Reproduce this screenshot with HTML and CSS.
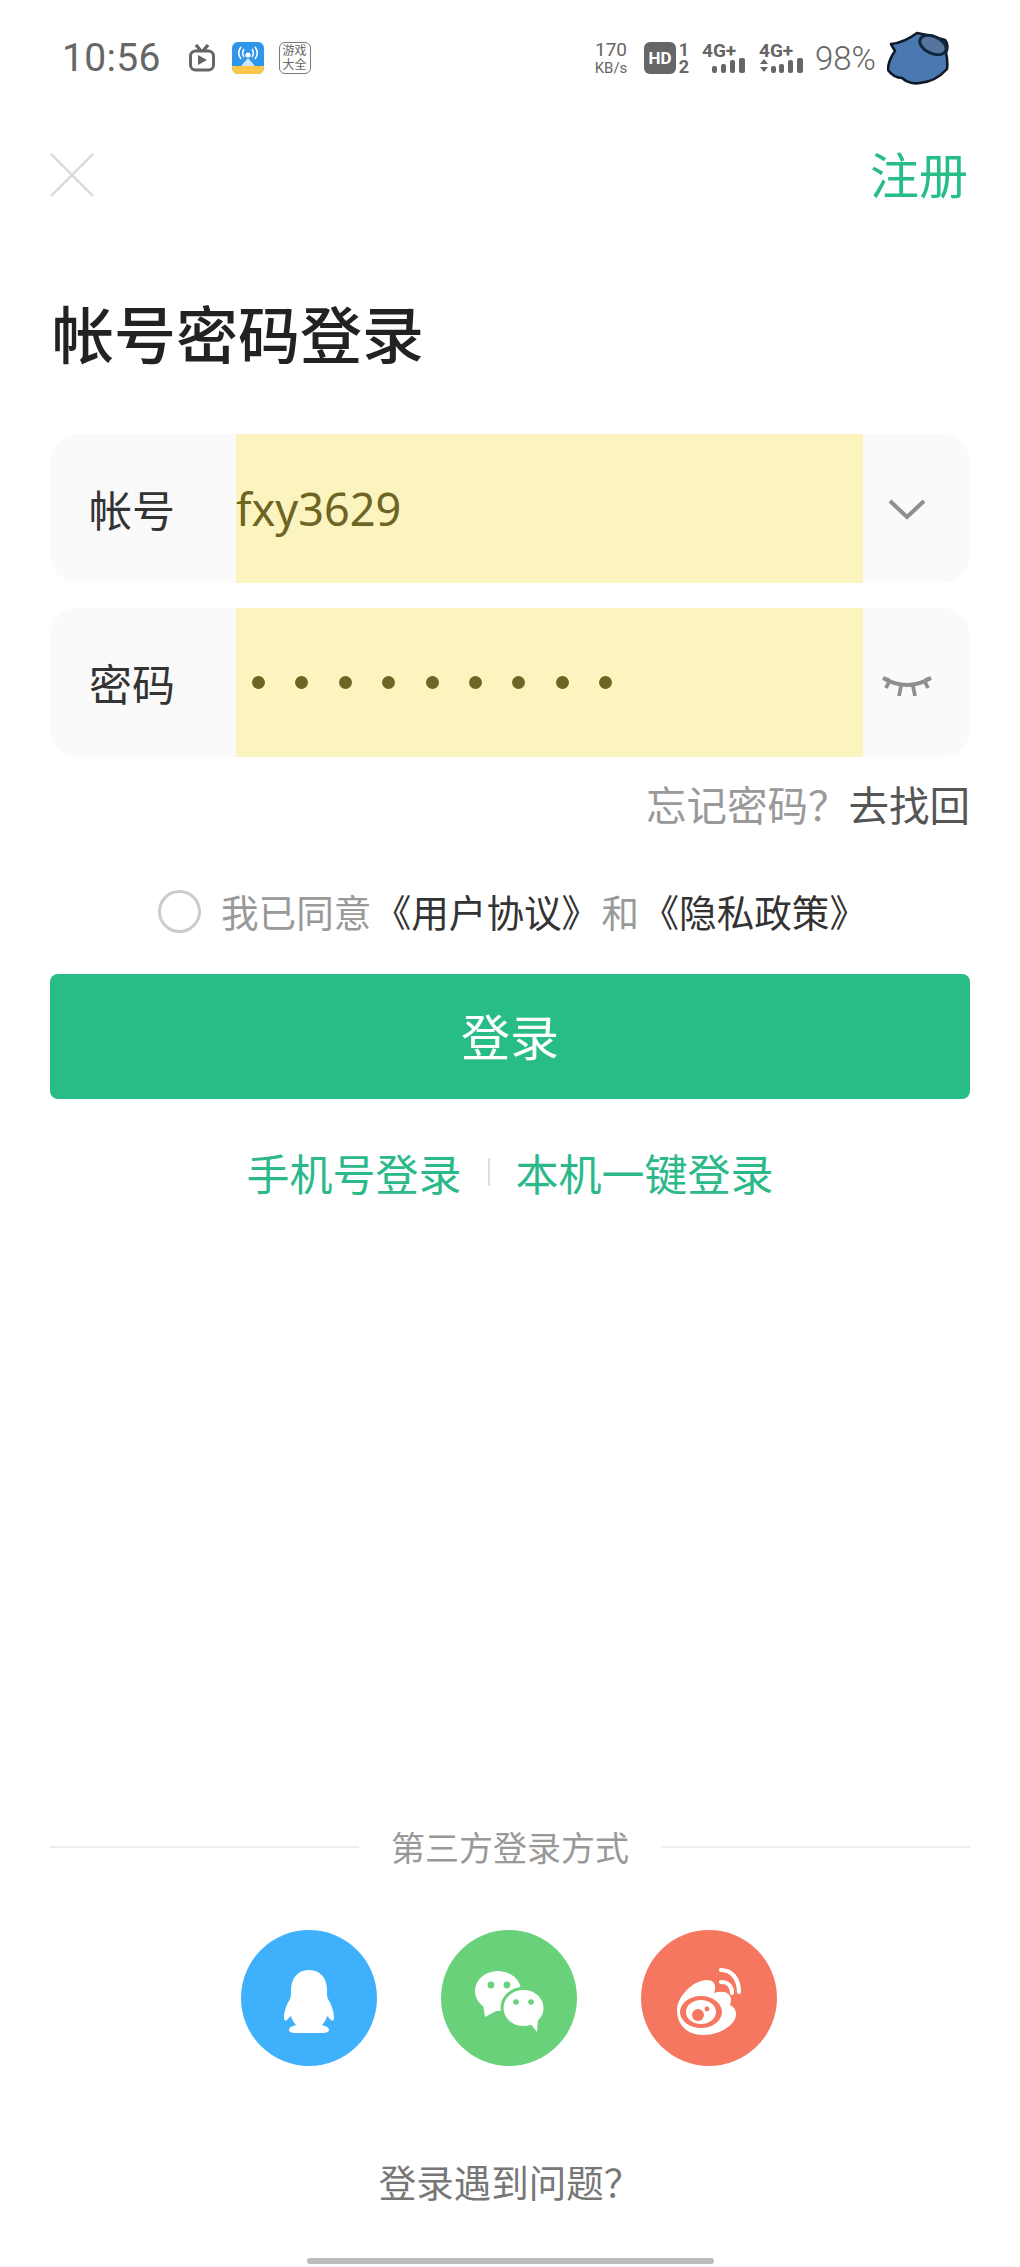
FILE: index.html
```html
<!DOCTYPE html>
<html lang="zh">
<head>
    <meta charset="UTF-8">
    <meta name="viewport" content="width=device-width, initial-scale=1.0">
    <title>帐号密码登录</title>
    <link rel="stylesheet" href="styles.css">
</head>
<body>
    <div class="page">
        <div class="status-bar">
            <span class="clock">10:56</span>
            <svg class="st-tv" width="26" height="28" viewBox="0 0 26 28">
                <path d="M7 1l5 6M19 1l-5 6" stroke="#666" stroke-width="3.4" fill="none"/>
                <rect x="1.5" y="7" width="23" height="19" rx="5" fill="none" stroke="#666" stroke-width="3"/>
                <path d="M9 11l9 5-9 5z" fill="#666"/>
            </svg>
            <svg class="st-wifi" width="32" height="32" viewBox="0 0 32 32">
                <rect width="32" height="32" rx="6" fill="#2f96ea"/>
                <path d="M0 24h32v2a6 6 0 0 1-6 6H6a6 6 0 0 1-6-6z" fill="#fbc64a"/>
                <path d="M9 5c-3 4-3 8 0 12M23 5c3 4 3 8 0 12M12 7c-2 3-2 5 0 8M20 7c2 3 2 5 0 8" stroke="#fff" stroke-width="1.6" fill="none"/>
                <circle cx="16" cy="13" r="2.6" fill="#fff"/>
                <path d="M9 24l7-8 7 8z" fill="#cfe6fa"/>
            </svg>
            <span class="st-game">游戏<br>大全</span>
            <span class="st-spacer"></span>
            <span class="speed">170<small>KB/s</small></span>
            <span class="hd"><b>HD</b></span>
            <span class="sim-nums">1<br>2</span>
            <span class="net">
                <b>4G+</b>
                <svg width="34" height="16" viewBox="0 0 34 16">
                    <rect x="0" y="8" width="5" height="7" rx="2" fill="#666"/>
                    <rect x="9" y="6" width="5" height="9" rx="2" fill="#666"/>
                    <rect x="18" y="2" width="5" height="13" rx="2" fill="#666"/>
                    <rect x="27" y="0" width="6" height="15" rx="2" fill="#666"/>
                </svg>
            </span>
            <span class="net net-2">
                <b>4G+</b>
                <svg width="45" height="16" viewBox="0 0 45 16">
                    <path d="M1 6l4-5 4 5zM1 9h8l-4 5z" fill="#666"/>
                    <rect x="12" y="8" width="5" height="7" rx="2" fill="#666"/>
                    <rect x="20" y="6" width="5" height="9" rx="2" fill="#666"/>
                    <rect x="29" y="2" width="5" height="13" rx="2" fill="#666"/>
                    <rect x="38" y="0" width="6" height="15" rx="2" fill="#666"/>
                </svg>
            </span>
            <span class="battery">98%</span>
            <svg class="avatar" width="62" height="54" viewBox="0 0 62 54">
                <path d="M30 2C22 8 14 12 4 13l4 7C3 27 1 32 1 39c3 5 9 8 14 8 5 5 13 6 18 5 11-1 19-5 27-14 1-8 0-12-1-16 2-4 2-10-1-13L40 4z" fill="#4a78b0" stroke="#0f1a28" stroke-width="2.6" stroke-linejoin="round"/>
                <ellipse cx="46" cy="14" rx="14" ry="8.5" transform="rotate(25 46 14)" fill="#56749c" stroke="#10263f" stroke-width="3"/>
            </svg>
        </div>

        <div class="nav">
            <svg class="close-icon" width="44" height="44" viewBox="0 0 44 44">
                <path d="M1 1l42 42M43 1L1 43" stroke="#d9d9d9" stroke-width="2.4"/>
            </svg>
            <a class="nav-register">注册</a>
        </div>

        <h1 class="title">帐号密码登录</h1>

        <div class="field">
            <span class="field-label">帐号</span>
            <div class="field-input">fxy3629</div>
            <div class="field-icon">
                <svg width="38" height="22" viewBox="0 0 38 22">
                    <path d="M2 3l17 16L36 3" fill="none" stroke="#8f8f8f" stroke-width="4"/>
                </svg>
            </div>
        </div>
        <div class="field field-second">
            <span class="field-label">密码</span>
            <div class="field-input password">
                <i></i><i></i><i></i><i></i><i></i><i></i><i></i><i></i><i></i>
            </div>
            <div class="field-icon">
                <svg class="eye" width="52" height="24" viewBox="0 0 52 24">
                    <path d="M2 3Q26 17 50 3M2 3l6 2M50 3l-6 2M8 7l-3 6M44 7l3 6M20 11l-2 10M32 11l2 10" fill="none" stroke="#8f8f8f" stroke-width="3.8"/>
                </svg>
            </div>
        </div>

        <div class="forgot">忘记密码？<a>去找回</a></div>

        <div class="agree">
            <span class="radio"></span>
            <span>我已同意<a>《用户协议》</a>和<a>《隐私政策》</a></span>
        </div>

        <button class="login-btn">登录</button>

        <div class="alt-login">
            <a>手机号登录</a>
            <span class="alt-sep"></span>
            <a>本机一键登录</a>
        </div>

        <div class="grow"></div>

        <div class="third-title"><span>第三方登录方式</span></div>

        <div class="socials">
            <div class="social qq">
                <svg width="136" height="136" viewBox="0 0 136 136">
                    <path d="M68 40c-12 0-18 9-18 20 0 4 0 7-1 9-3 5-6 12-6 19 0 3 2 3 3 2l4-4c1 4 3 7 5 9-3 1-7 2-7 5 0 2 3 3 6 3h28c3 0 6-1 6-3 0-3-4-4-7-5 2-2 4-5 5-9l4 4c1 1 3 1 3-2 0-7-3-14-6-19-1-2-1-5-1-9 0-11-6-20-18-20z" fill="#fff"/>
                </svg>
            </div>
            <div class="social wechat">
                <svg width="136" height="136" viewBox="0 0 136 136">
                    <ellipse cx="57" cy="61" rx="23" ry="20" fill="#fff"/>
                    <path d="M42 74l2 13 13-7z" fill="#fff"/>
                    <circle cx="50" cy="55" r="3.4" fill="#68d17a"/>
                    <circle cx="66" cy="55" r="3.4" fill="#68d17a"/>
                    <ellipse cx="82.5" cy="78" rx="21.5" ry="19.5" fill="#fff" stroke="#68d17a" stroke-width="3"/>
                    <path d="M88 92l8 10 1-13z" fill="#fff"/>
                    <circle cx="75" cy="72" r="2.8" fill="#68d17a"/>
                    <circle cx="90" cy="72" r="2.8" fill="#68d17a"/>
                </svg>
            </div>
            <div class="social weibo">
                <svg width="136" height="136" viewBox="0 0 136 136">
                    <path d="M36 80c0-13 16-30 30-30 7 0 10 5 7 13 10-3 17 0 17 7 0 2-1 4-1 5 4 2 6 5 6 9 0 11-16 21-33 21-15 0-26-9-26-25z" fill="#fff"/>
                    <ellipse cx="60" cy="82" rx="21" ry="16" fill="#f5775f"/>
                    <ellipse cx="60" cy="82" rx="15" ry="12" fill="#fff"/>
                    <circle cx="57" cy="85" r="6" fill="#f5775f"/>
                    <circle cx="66" cy="79" r="2.4" fill="#f5775f"/>
                    <path d="M80 40c10 0 18 8 18 22M80 52c7 0 11 4 11 11" fill="none" stroke="#fff" stroke-width="4.2" stroke-linecap="round"/>
                </svg>
            </div>
        </div>

        <div class="help">登录遇到问题？</div>
        <div class="home-bar"></div>
    </div>
</body>
</html>
```

FILE: styles.css
```css
* {
    box-sizing: border-box;
}
html, body {
    margin: 0;
    padding: 0;
    background: #fff;
}
body {
    font-family: "Noto Sans CJK SC", "Noto Sans", sans-serif;
}
.page {
    display: flex;
    flex-direction: column;
    width: 1020px;
    height: 2267px;
    padding: 0 50px;
    overflow: hidden;
}

/* status bar */
.status-bar {
    display: flex;
    align-items: center;
    height: 116px;
    margin-right: 21px;
    color: #666;
    font-family: Roboto, sans-serif;
}
.clock {
    margin-left: 12px;
    font-size: 39px;
    letter-spacing: 0.3px;
}
.st-tv {
    margin-left: 28px;
}
.st-wifi {
    margin-left: 17px;
}
.st-game {
    width: 32px;
    height: 32px;
    margin-left: 15px;
    border: 1.5px solid #777;
    border-radius: 6px;
    font-family: "Noto Sans CJK SC", sans-serif;
    font-size: 12px;
    line-height: 14px;
    text-align: center;
}
.st-spacer {
    flex: 1;
}
.speed {
    width: 36px;
    font-size: 19px;
    line-height: 20px;
    text-align: center;
    white-space: nowrap;
}
.speed small {
    display: block;
    font-size: 15px;
    line-height: 17px;
}
.hd {
    display: flex;
    align-items: center;
    justify-content: center;
    width: 32px;
    height: 32px;
    margin-left: 15px;
    background: #666;
    border-radius: 6px;
    color: #fff;
    font-size: 17px;
}
.sim-nums {
    width: 12px;
    margin-left: 2px;
    font-size: 18px;
    font-weight: 700;
    line-height: 17px;
    text-align: center;
}
.net {
    display: flex;
    flex-direction: column;
    align-items: flex-end;
    width: 44px;
    margin-left: 12px;
    font-size: 19px;
    line-height: 15px;
}
.net b {
    align-self: flex-start;
}
.net-2 {
    width: 45px;
    margin-left: 13px;
}
.battery {
    margin-left: 11px;
    font-size: 33px;
    font-weight: 300;
}
.avatar {
    margin-left: 11px;
}

/* nav */
.nav {
    display: flex;
    align-items: center;
    justify-content: space-between;
    height: 70px;
    margin-top: 24px;
}
.nav-register {
    margin: -6px 2px 0 0;
    color: #27bd87;
    font-size: 49px;
}

.title {
    margin: 77px 0 0 2px;
    color: #222;
    font-size: 62px;
    font-weight: 500;
    line-height: 90px;
}

/* fields */
.field {
    display: flex;
    height: 149px;
    margin-top: 57px;
    background: #fafafa;
    border-radius: 28px;
}
.field-second {
    margin-top: 25px;
}
.field-label {
    display: flex;
    align-items: center;
    width: 186px;
    padding: 0 0 2px 39px;
    color: #333;
    font-size: 43px;
}
.field-input {
    display: flex;
    align-items: center;
    width: 627px;
    background: #fbf4bf;
    color: #6e6424;
    font-family: "Noto Sans", sans-serif;
    font-size: 45px;
}
.password {
    gap: 30.4px;
    padding-left: 16px;
}
.password i {
    width: 13px;
    height: 13px;
    border-radius: 50%;
    background: #6e6424;
}
.field-icon {
    display: flex;
    flex: 1;
    align-items: center;
    justify-content: center;
    padding-right: 20px;
}
.eye {
    margin-top: 8px;
}

.forgot {
    margin-top: 18px;
    color: #999;
    font-size: 40.5px;
    line-height: 58px;
    text-align: right;
}
.forgot a {
    color: #555;
}

.agree {
    display: flex;
    align-items: center;
    margin: 51px 0 0 108px;
    color: #999;
    font-size: 37.6px;
    line-height: 54px;
    white-space: nowrap;
}
.agree a {
    margin: 0 2.4px;
    color: #333;
}
.radio {
    width: 43px;
    height: 43px;
    margin-right: 20px;
    border: 3px solid #ccc;
    border-radius: 50%;
}

.login-btn {
    height: 125px;
    margin-top: 36px;
    padding: 0 0 4px;
    background: #28bd86;
    border: none;
    border-radius: 8px;
    color: #fff;
    font-family: inherit;
    font-size: 49px;
}

.alt-login {
    display: flex;
    align-items: center;
    justify-content: center;
    margin-top: 42px;
    color: #2cb98a;
    font-size: 43px;
    line-height: 62px;
}
.alt-sep {
    width: 2px;
    height: 28px;
    margin: 0 26px;
    background: #ddd;
}

.grow {
    flex: 1;
}

/* third party */
.third-title {
    display: flex;
    align-items: center;
    gap: 32px;
    color: #999;
    font-size: 34px;
    line-height: 50px;
}
.third-title::before, .third-title::after {
    content: "";
    flex: 1;
    height: 2px;
    background: #eee;
}
.socials {
    display: flex;
    justify-content: center;
    gap: 64px;
    margin: 58px 2px 0 0;
}
.social {
    width: 136px;
    height: 136px;
    border-radius: 50%;
}
.social svg {
    display: block;
}
.qq {
    background: #3fb1fc;
}
.wechat {
    background: #68d17a;
}
.weibo {
    background: #f5775f;
}

.help {
    margin-top: 88px;
    color: #777;
    font-size: 37.5px;
    line-height: 54px;
    text-align: center;
}
.home-bar {
    width: 407px;
    height: 6px;
    margin: 50px auto 3px;
    background: #bbb;
    border-radius: 3px;
}
```
